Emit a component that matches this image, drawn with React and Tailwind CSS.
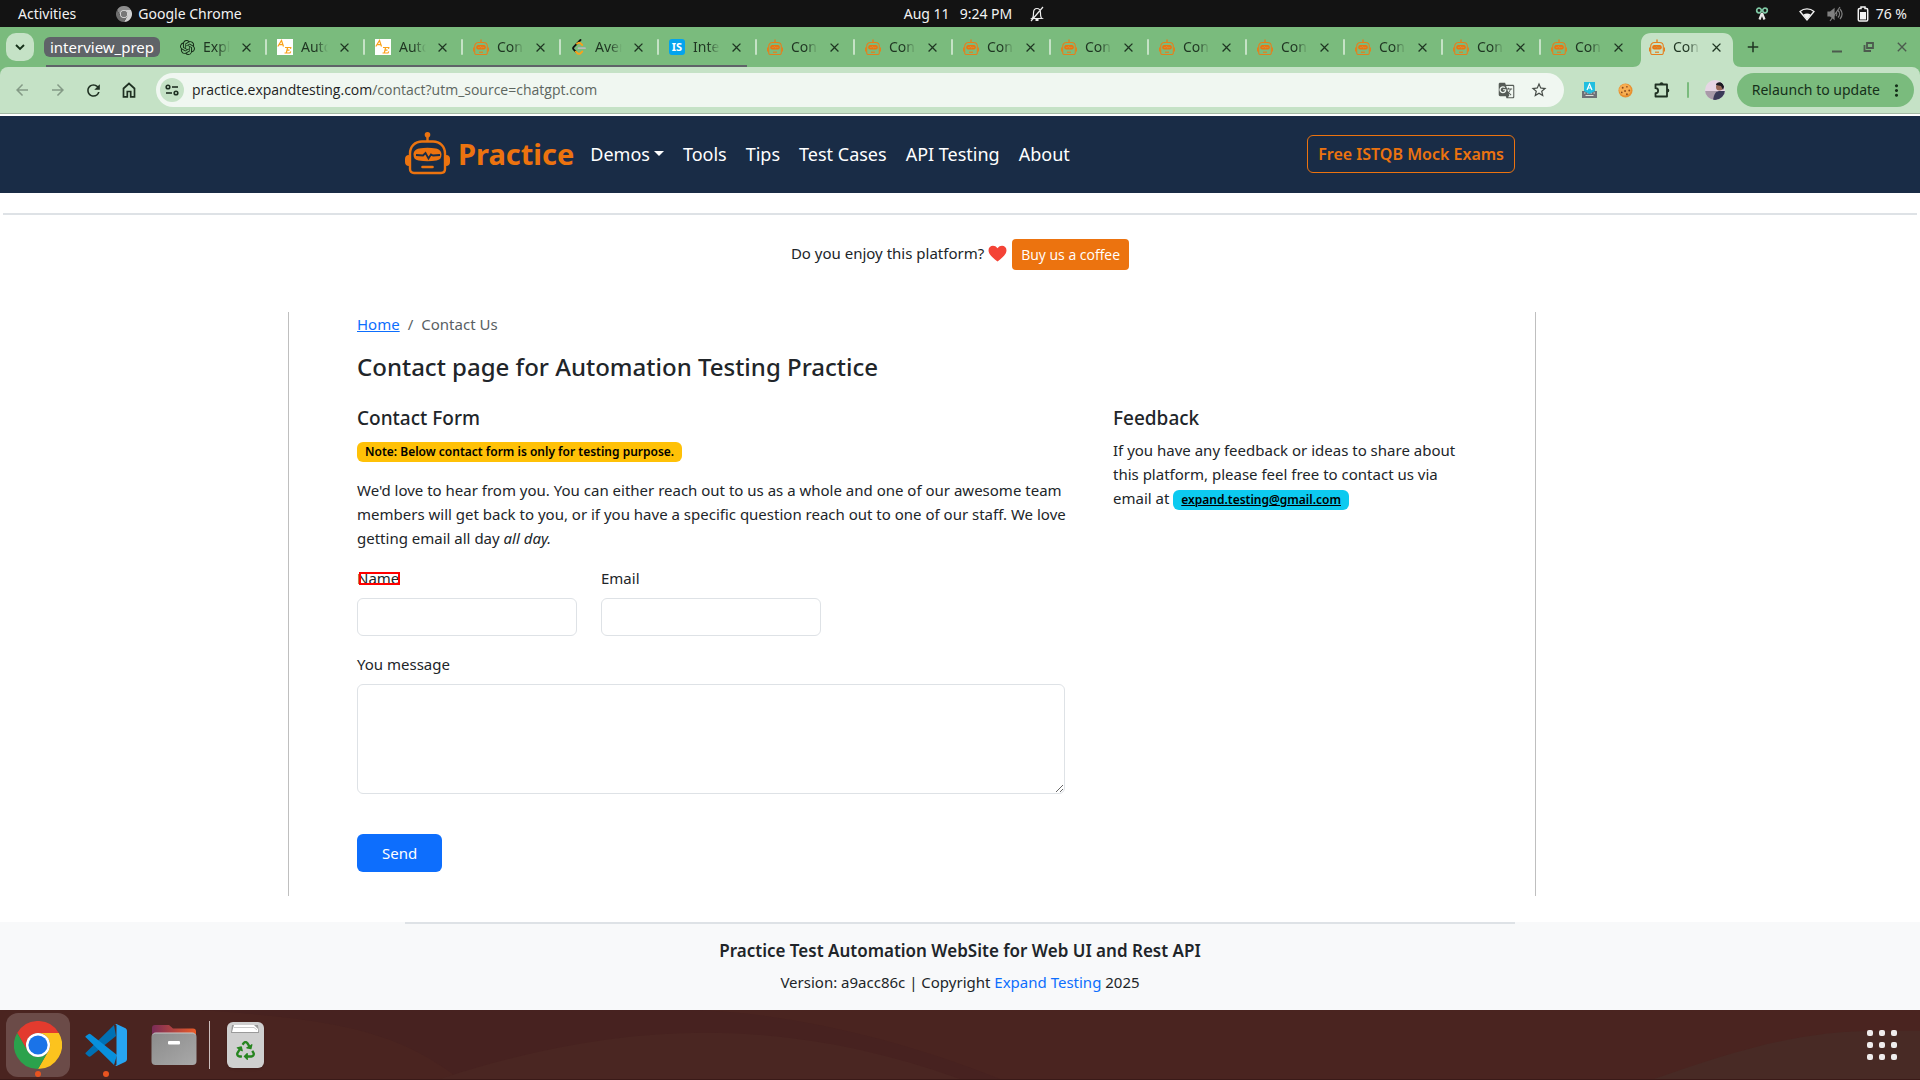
import React from "react";
import { MdGTranslate, MdStarBorder, MdRefresh, MdClose, MdAdd, MdMoreVert, MdArrowBack, MdArrowForward } from "react-icons/md";
import { SiOpenai } from "react-icons/si";
import { FaRecycle } from "react-icons/fa";

function Robot({ className }) {
  return (
    <svg viewBox="0 0 45 43" className={className} fill="none" aria-hidden="true">
      <g stroke="#ec730f" strokeWidth="2.4">
        <path d="M22.5 4v6" />
        <path d="M17 9.5h11c7 0 12 5 12 12V37c0 2.500-1.500 4-4 4H9c-2.500 0-4-1.500-4-4V21.500c0-7 5-12 12-12Z" />
      </g>
      <circle cx="22.500" cy="2.800" r="2.800" fill="#ec730f" />
      <path d="M4 23c-3 0-4 2-4 4v3c0 2.500 1.500 4 4 4ZM41 23c3 0 4 2 4 4v3c0 2.500-1.500 4-4 4Z" fill="#ec730f" />
      <path d="M14 16.500c6-1 11-1 17 0 3 .5 5.500 2.500 5.500 6s-1.500 5.500-5 6c-6 1-12 1-18 0-3.500-.5-5-2.500-5-6s2.500-5.500 5.500-6Z" fill="#ec730f" />
      <path d="M11 23l7 .5 2.500-2.500 3 5.500 2.500-4 2 1 7-.5" stroke="#192c46" strokeWidth="1.800" />
      <path d="M17.500 35h10" stroke="#ec730f" strokeWidth="2.600" strokeLinecap="round" />
    </svg>
  );
}

function TinyRobot() {
  return (
    <svg viewBox="0 0 16 16" className="size-4" fill="none" aria-hidden="true">
      <path d="M8 0.500v3" stroke="#e57f1d" strokeWidth="1.400" />
      <path d="M5.500 3.500h5c2.300 0 3.800 1.600 3.800 3.700V14c0 1-.5 1.500-1.500 1.500H3.200c-1 0-1.500-.5-1.500-1.500V7.200c0-2.100 1.500-3.700 3.800-3.700Z" stroke="#e57f1d" strokeWidth="1.100" />
      <path d="M.6 8.500v4M15.400 8.500v4" stroke="#e57f1d" strokeWidth="1.200" />
      <rect x="3.200" y="6" width="9.600" height="4.600" rx="2" fill="#ec730f" />
      <path d="M4.800 8.300h2l1-.8.8 1.500.8-.7h2" stroke="#b9a25a" strokeWidth=".7" />
      <path d="M6 13.200h4" stroke="#e57f1d" strokeWidth="1.200" />
    </svg>
  );
}

function AeIcon() {
  return (
    <svg viewBox="0 0 16 16" className="size-4" fill="none" aria-hidden="true">
      <rect width="16" height="16" fill="#fff" />
      <g stroke="#f9a21b" strokeWidth="1.200">
        <path d="M.8 7.500 4.500 1.500l2 6M2 5.600h4" />
        <path d="M8 8.500h5.800l-.3 1.300M10.600 8.500l-1.300 5.500M7.500 14h5.500l.8-1.600M10 11.200h2.500" />
      </g>
    </svg>
  );
}

function LeetIcon() {
  return (
    <svg viewBox="0 0 16 16" className="size-4" fill="none" strokeWidth="1.800" strokeLinecap="round" aria-hidden="true">
      <path d="M9.500 1 2.800 7.800c-.8.800-.8 2 0 2.800l2 2" stroke="#111" />
      <path d="M4.800 12.600l1.400 1.400c1 1 2.600 1 3.600 0l1.500-1.500M6 4.800l.8-.6c1-.6 2.200-.4 3 .4l1.400 1.400" stroke="#f9a21b" />
      <path d="M7.500 9.200h6.500" stroke="#b9b9b9" />
    </svg>
  );
}

function IsIcon() {
  return (
    <span className="flex size-4 items-center justify-center rounded-[3px] bg-[#03a4ee] text-[11px] leading-4 font-bold text-white">IS</span>
  );
}

const icons = {
  openai: <SiOpenai className="size-[15px] text-[#142a17]" />,
  ae: <AeIcon />,
  bot: <TinyRobot />,
  leet: <LeetIcon />,
  is: <IsIcon />,
};

const groupTabs = [
  ["openai", "Expl"],
  ["ae", "Auto"],
  ["ae", "Auto"],
  ["bot", "Con"],
  ["leet", "Aver"],
  ["is", "Inte"],
];
const restTabs = Array.from({ length: 9 }, () => ["bot", "Con"]);

function Tab({ icon, label, active, last }) {
  return (
    <div className="relative flex h-10 w-[98px] items-center pl-[11px]">
      {active && (
        <svg viewBox="0 0 108 34" preserveAspectRatio="none" className="absolute bottom-0 -left-[5px] h-[34px] w-[108px]" aria-hidden="true">
          <path d="M0 34c5 0 8-3 8-8V10C8 4 12 0 18 0h72c6 0 10 4 10 10v16c0 5 3 8 8 8Z" fill="#c5e2c6" />
        </svg>
      )}
      <button className="relative flex items-center gap-2">
        <span className="flex size-4 items-center justify-center">{icons[icon]}</span>
        <span className="w-[27px] overflow-hidden text-left text-[14px] leading-5 whitespace-nowrap text-[#1f3522] [mask-image:linear-gradient(to_right,black_55%,transparent)]">{label}</span>
      </button>
      <button aria-label="Close tab" className="relative ml-[9px]">
        <MdClose className="size-[15px] text-[#1f3522]" />
      </button>
      {!active && !last && <span className="absolute top-3 -right-px h-4 w-0.5 rounded bg-[#c5e2c6]" />}
    </div>
  );
}

function ChromeMark({ className, mono }) {
  const c = mono ? ["#8d8d8d", "#d0d0d0", "#6d6d6d", "#eeeeee", "#777777"] : ["#e33b2e", "#fcc31e", "#2ba24c", "#ffffff", "#1a73e8"];
  return (
    <svg viewBox="0 0 48 48" className={className} aria-hidden="true">
      <path d="M3.200 12A24 24 0 0 1 44.800 12H24A12 12 0 0 0 13.600 30Z" fill={c[0]} />
      <path d="M44.800 12A24 24 0 0 1 24 48L34.400 30A12 12 0 0 0 24 12Z" fill={c[1]} />
      <path d="M24 48A24 24 0 0 1 3.200 12L13.600 30A12 12 0 0 0 34.400 30Z" fill={c[2]} />
      <circle cx="24" cy="24" r="12" fill={c[3]} />
      <circle cx="24" cy="24" r="9.600" fill={c[4]} />
    </svg>
  );
}

function TopBar() {
  return (
    <header className="grid h-[27px] grid-cols-[1fr_auto_1fr] items-center bg-[#131313] px-[18px] text-[14px] leading-5 text-[#f2f2f2]">
      <div className="flex items-center">
        <button>Activities</button>
        <button className="ml-10 flex items-center gap-[6px]">
          <ChromeMark mono className="size-4" />
          Google Chrome
        </button>
      </div>
      <div className="ml-[29px] flex items-center">
        <span>Aug 11</span>
        <span className="ml-2.5">9:24 PM</span>
        <svg viewBox="0 0 16 16" className="ml-[17px] size-4" fill="none" stroke="#eee" strokeWidth="1.200" aria-hidden="true">
          <path d="M3 12.500h10c-1.500-1-1.500-3-1.500-5.500C11.500 4 10 2.500 8 2.500S4.500 4 4.500 7c0 2.500 0 4.500-1.500 5.500ZM14 1 2 15" />
          <path d="M6.500 14h3" strokeWidth="2" />
        </svg>
      </div>
      <div className="-mr-[5px] flex items-center justify-end">
        <svg viewBox="0 0 14 14" className="size-3.5" fill="none" aria-hidden="true">
          <path d="M7 6 9.500 12.500M7 6 4.500 12.500" stroke="#e8e8e8" strokeWidth="2.200" />
          <circle cx="4" cy="3.500" r="2.300" stroke="#7fc8a4" strokeWidth="1.700" />
          <circle cx="10" cy="3.500" r="2.300" stroke="#7fc8a4" strokeWidth="1.700" />
        </svg>
        <svg viewBox="0 0 16 14" className="ml-[30px] h-3.5 w-4" aria-hidden="true">
          <path d="M1 4.500C5 1 11 1 15 4.500L8 13Z" fill="none" stroke="#f2f2f2" strokeWidth="1.300" />
          <path d="M4.300 7.500c2.500-1.500 5-1.500 7.400 0L8 12.500Z" fill="#f2f2f2" />
        </svg>
        <svg viewBox="0 0 16 16" className="ml-3 size-4" fill="none" stroke="#808080" strokeWidth="1.200" aria-hidden="true">
          <path d="M1 6h2.500L7 3v10l-3.500-3H1Z" fill="#808080" />
          <path d="M9 6c1 1 1 3 0 4M11 4.500c2 2 2 5 0 7M13 3c2.500 3 2.500 7 0 10M13 1 3 15" />
        </svg>
        <svg viewBox="0 0 12 16" className="ml-3.5 h-4 w-3" aria-hidden="true">
          <path d="M4 1h4v1.500h1.500c.8 0 1.200.4 1.200 1.200v10c0 .8-.4 1.300-1.200 1.300h-7c-.8 0-1.200-.5-1.200-1.300v-10c0-.8.4-1.200 1.200-1.200H4Z" fill="none" stroke="#f2f2f2" strokeWidth="1.500" />
          <path d="M3 6h6v7.500H3Z" fill="#f2f2f2" />
        </svg>
        <span className="ml-[7px]">76 %</span>
      </div>
    </header>
  );
}

function TabStrip() {
  return (
    <div className="flex h-10 items-center bg-[#7abb7d] pl-1.5">
      <button aria-label="Search tabs" className="flex size-7 items-center justify-center rounded-[10px] bg-[#c5e2c6]">
        <svg viewBox="0 0 10 10" className="size-2.5" fill="none" stroke="#16301a" strokeWidth="1.900" aria-hidden="true"><path d="m1 3 4 4 4-4" /></svg>
      </button>
      <div className="relative ml-2.5 flex items-center">
        <button className="mr-2 h-5 w-[116px] rounded-md bg-[#5f6368] text-center text-[15px] leading-5 text-white">interview_prep</button>
        {groupTabs.map(([icon, label], i) => <Tab key={i} icon={icon} label={label} />)}
        <span className="absolute right-[9px] bottom-0 left-0.5 h-0.5 bg-[#5f6368]" />
      </div>
      {restTabs.map(([icon, label], i) => <Tab key={i} icon={icon} label={label} last={i === 8} />)}
      <Tab icon="bot" label="Con" active />
      <button aria-label="New tab" className="ml-2"><MdAdd className="size-[18px] text-[#1f3522]" /></button>
      <div className="mr-2.5 ml-auto flex items-center gap-[18px] text-[#4c5a4e]">
        <button aria-label="Minimize">
          <svg viewBox="0 0 14 14" className="size-3.5" aria-hidden="true"><path d="M2 10.500h10v2H2z" fill="currentColor" /></svg>
        </button>
        <button aria-label="Restore">
          <svg viewBox="0 0 14 14" className="size-3.5" fill="none" stroke="currentColor" strokeWidth="1.800" aria-hidden="true"><path d="M5 3h6v5H5zM2.500 5v6H9" /></svg>
        </button>
        <button aria-label="Close"><MdClose className="size-4" /></button>
      </div>
    </div>
  );
}

function Toolbar() {
  return (
    <div className="bg-[#7abb7d]">
      <div className="flex h-[47px] items-center rounded-t-lg border-b border-[#a3b8a4] bg-[#c5e2c6] pr-1.5 pl-[13px] text-[#1f3022]">
        <button aria-label="Back" className="text-[#849a86]"><MdArrowBack className="size-[18px]" /></button>
        <button aria-label="Forward" className="ml-[18px] text-[#849a86]"><MdArrowForward className="size-[18px]" /></button>
        <button aria-label="Reload" className="ml-[17px]"><MdRefresh className="size-[19px]" /></button>
        <button aria-label="Home" className="ml-[17px]">
          <svg viewBox="0 0 18 18" className="size-[18px]" fill="none" stroke="currentColor" strokeWidth="1.700" aria-hidden="true">
            <path d="M3.500 7.500 9 2.500l5.500 5v8.300h-3.800V10.500H7.300v5.300H3.500Z" />
          </svg>
        </button>
        <div className="ml-[18px] flex h-[34px] flex-1 items-center rounded-full bg-[#f0f7f1] pr-4 pl-1">
          <button aria-label="Site information" className="flex size-6 items-center justify-center rounded-full bg-[#c5e2c6]">
            <svg viewBox="0 0 14 14" className="size-3.5" fill="none" stroke="currentColor" strokeWidth="1.600" aria-hidden="true">
              <circle cx="3" cy="4" r="1.800" /><path d="M7 4h6" /><circle cx="11" cy="10" r="1.800" /><path d="M1 10h6" />
            </svg>
          </button>
          <div className="ml-2 flex-1 text-[14px] leading-5 text-[#1f1f1f] [font-family:'Open_Sans',sans-serif]">
            practice.expandtesting.com<span className="text-[#5d6660]">/contact?utm_source=chatgpt.com</span>
          </div>
          <button aria-label="Translate"><MdGTranslate className="size-[17px] text-[#555b56]" /></button>
          <button aria-label="Bookmark" className="ml-[15px]"><MdStarBorder className="size-[18px] text-[#454b46]" /></button>
        </div>
        <button aria-label="Typing extension" className="ml-[17px]">
          <svg viewBox="0 0 17 17" className="size-[17px]" aria-hidden="true">
            <path d="M1 9h15v7H1z" fill="#6d7176" />
            <path d="M3 11h1.500M6 11h1.500M9.500 11H11M12.500 11H14M4.500 13.500h8" stroke="#d8dcd8" />
            <path d="M3 0h11v9l-5.500 3L3 9Z" fill="#21bfe0" />
            <path d="m6 8 2.500-6L11 8M7 6h3" stroke="#fff" strokeWidth="1.200" fill="none" />
          </svg>
        </button>
        <button aria-label="Cookie extension" className="ml-5">
          <svg viewBox="0 0 16 16" className="size-[15px]" aria-hidden="true">
            <circle cx="8" cy="8" r="7.500" fill="#e8902f" /><circle cx="7.500" cy="7.200" r="6.200" fill="#f7ae52" />
            <g fill="#8a4a1c"><circle cx="5" cy="5" r="1" /><circle cx="9.500" cy="4" r=".9" /><circle cx="12" cy="8" r="1" /><circle cx="7.500" cy="8.500" r="1" /><circle cx="4" cy="10" r=".9" /><circle cx="9.500" cy="12" r="1" /></g>
          </svg>
        </button>
        <button aria-label="Extensions" className="ml-5">
          <svg viewBox="0 0 18 18" className="size-[18px]" fill="none" stroke="currentColor" strokeWidth="1.800" strokeLinejoin="round" aria-hidden="true">
            <path d="M2.500 3.500H14v12H2.500V12.200c3.500 0 3.500-5 0-5Z" />
            <path d="M6.500 3.200a2 2 0 0 1 4 0ZM14.300 7.500a2 2 0 0 1 0 4Z" fill="currentColor" strokeWidth="0" />
          </svg>
        </button>
        <span className="ml-4 h-4 w-0.5 rounded bg-[#7abb7d]" />
        <button aria-label="Profile" className="ml-4">
          <svg viewBox="0 0 20 20" className="size-5 overflow-hidden rounded-full" aria-hidden="true">
            <path d="M0 0h20v20H0z" fill="#e6d6e4" />
            <path d="M0 11h12v9H0z" fill="#a89aa8" />
            <path d="M8 20c1-6 3-9 6-9h6v9Z" fill="#3a3a58" />
            <circle cx="14.500" cy="7" r="3.500" fill="#9a6a58" />
            <path d="M11 5c0-4 8-4 8 2l-1 3-2-4Z" fill="#1c1a22" />
          </svg>
        </button>
        <button className="ml-3 flex h-[34px] items-center rounded-full bg-[#7abb7d] pr-2 pl-[15px] text-[14px] leading-5 text-[#16301a]">
          Relaunch to update
          <MdMoreVert className="ml-[7px] size-[19px]" />
        </button>
      </div>
    </div>
  );
}

function SiteNav() {
  return (
    <nav className="mt-0.5 bg-[#192c46]">
      <div className="mx-auto flex h-[77px] max-w-[1110px] items-center pb-0.5">
        <a href="#home" className="flex items-center gap-2 text-[#ec730f]">
          <Robot className="h-[43px] w-[45px]" />
          <span className="text-[29px] leading-9 font-bold">Practice</span>
        </a>
        <div className="ml-4 flex items-center gap-[19px] text-[18px] leading-7 text-white">
          <a href="#demos" className="flex items-center gap-1">
            Demos
            <svg viewBox="0 0 10 5" className="h-[5px] w-2.5" aria-hidden="true"><path d="M0 0h10L5 5Z" fill="currentColor" /></svg>
          </a>
          <a href="#tools">Tools</a>
          <a href="#tips">Tips</a>
          <a href="#cases">Test Cases</a>
          <a href="#api">API Testing</a>
          <a href="#about">About</a>
        </div>
        <a href="#exams" className="ml-auto rounded-md border border-[#ec730f] px-2.5 py-1.5 text-[16px] leading-6 font-semibold text-[#ec730f]">Free ISTQB Mock Exams</a>
      </div>
    </nav>
  );
}

const field = "block w-full rounded-md border border-[#dee2e6] bg-white px-3 py-1.5 text-[15px] leading-6 outline-none";

function ContactForm() {
  return (
    <form className="mt-4 grid grid-cols-3 gap-x-6 gap-y-4 pr-6" onSubmit={(e) => e.preventDefault()}>
      <div>
        <label htmlFor="name" className="relative mb-2 inline-block">
          Name
          <span className="absolute top-1.5 left-0.5 h-[13px] w-[41px] border-2 border-[#ff0000]" />
        </label>
        <input id="name" type="text" className={field} />
      </div>
      <div>
        <label htmlFor="email" className="mb-2 inline-block">Email</label>
        <input id="email" type="email" className={field} />
      </div>
      <div className="col-span-3">
        <label htmlFor="message" className="mb-2 inline-block">You message</label>
        <textarea id="message" rows={4} className={field + " resize-y"} />
      </div>
      <div className="col-span-3 mt-6">
        <button type="submit" className="rounded-md bg-[#0d6efd] px-[25px] py-[7px] leading-6 text-white">Send</button>
      </div>
    </form>
  );
}

function Main() {
  return (
    <main className="grow">
      <hr className="mx-[3px] mt-5 border-t-2 border-[#dee2e6]" />
      <div className="mt-6 flex items-start justify-center">
        <span className="mt-0.5">Do you enjoy this platform?</span>
        <svg viewBox="0 0 20 18" className="mt-1.5 ml-1 h-[17px] w-[19px]" aria-label="heart">
          <path d="M10 17.500C4 13 .5 9.500.5 5.500c0-5 6.500-6.500 9.500-2 3-4.500 9.500-3 9.500 2 0 4-3.500 7.500-9.500 12Z" fill="#f44336" />
        </svg>
        <a href="#coffee" className="ml-[5px] rounded bg-[#ec730f] px-[9px] py-[5px] text-[14px] leading-[21px] text-white [font-family:'Open_Sans',sans-serif]">Buy us a coffee</a>
      </div>
      <div className="mt-[42px] mr-[20%] ml-[15%] border-x border-[#bfbfbf] px-[68px] pb-6">
        <ol className="flex leading-6">
          <li><a href="#home" className="text-[#0d6efd] underline">Home</a></li>
          <li className="px-2 text-[#595f64]">/</li>
          <li className="text-[#595f64]">Contact Us</li>
        </ol>
        <h1 className="mt-4 text-[24px] leading-[30px] font-medium">Contact page for Automation Testing Practice</h1>
        <div className="mt-6 grid grid-cols-3 gap-6">
          <section className="col-span-2">
            <h2 className="text-[19px] leading-6 font-medium">Contact Form</h2>
            <p className="mt-2.5 flex h-6 items-center">
              <span className="rounded-md bg-[#ffc107] px-2 py-0.5 text-[12px] leading-4 font-semibold text-black">Note: Below contact form is only for testing purpose.</span>
            </p>
            <p className="mt-3.5">
              We'd love to hear from you. You can either reach out to us as a whole and one of our awesome team members will get back to you, or if you have a specific question reach out to one of our staff. We love getting email all day <em>all day.</em>
            </p>
            <ContactForm />
          </section>
          <section>
            <h2 className="text-[19px] leading-6 font-medium">Feedback</h2>
            <p className="mt-2">
              If you have any feedback or ideas to share about this platform, please feel free to contact us via email at{" "}
              <a href="#mail" className="inline-block rounded-md bg-[#0dcaf0] px-2 py-0.5 align-middle text-[12px] leading-4 font-semibold text-black underline">expand.testing@gmail.com</a>
            </p>
          </section>
        </div>
      </div>
    </main>
  );
}

function Footer() {
  return (
    <footer className="mt-[25px] bg-[#f8f9fa] pb-4 text-center">
      <hr className="mx-auto max-w-[1110px] border-t-2 border-[#dee2e6]" />
      <h2 className="mt-4 text-[17px] leading-[22px] font-semibold">Practice Test Automation WebSite for Web UI and Rest API</h2>
      <p className="mt-2 leading-6">
        Version: a9acc86c | Copyright <a href="#site" className="text-[#0d6efd]">Expand Testing</a> 2025
      </p>
    </footer>
  );
}

function Dock() {
  return (
    <div className="relative flex h-[70px] shrink-0 items-center overflow-hidden border-b border-[#3a1a18] bg-[#4a2420] pl-1.5">
      <svg viewBox="0 0 1920 70" preserveAspectRatio="none" className="absolute inset-0 size-full" aria-hidden="true">
        <path d="M200 0c150 10 200 25 260 70h540C900 30 800 5 700 0Z" fill="#472220" />
        <path d="M440 70C620 10 780 5 960 70Z" fill="#4a2622" />
        <path d="M1654 70C1740 40 1800 21 1880 21h40v49Z" fill="#482a25" />
      </svg>
      <button aria-label="Google Chrome" className="relative flex size-16 items-center justify-center rounded-xl bg-[#6b4b48]">
        <ChromeMark className="size-12" />
        <span className="absolute bottom-0 size-1.5 rounded-full bg-[#e95420]" />
      </button>
      <button aria-label="Visual Studio Code" className="relative ml-1 flex size-16 items-center justify-center">
        <svg viewBox="0 0 42 42" className="size-[42px]" aria-hidden="true">
          <path d="M1 28.500 29 1l2 11L6 32c-1 1-2 1-3 0L.8 30c-.6-.6-.5-1 .2-1.500Z" fill="#0070b3" />
          <path d="M1 13.500 29 41l3-10L6 10.500c-1-1-2-1-3 0L.8 12c-.6.6-.5 1 .2 1.500Z" fill="#0890dc" />
          <path d="M29 .5c1-.8 2-.6 3-.2L40 4c1.300.7 2 1.500 2 3v28c0 1.500-.7 2.300-2 3l-8 3.700c-1 .4-2 .6-3-.2 1.500.7 2.500 0 2.500-1.500V2C31.500.5 30.500-.2 29 .5Z" fill="#27a5f2" />
        </svg>
        <span className="absolute bottom-0 size-1.5 rounded-full bg-[#e95420]" />
      </button>
      <button aria-label="Files" className="relative ml-1 flex size-16 items-center justify-center">
        <svg viewBox="0 0 46 42" className="h-[42px] w-[46px]" aria-hidden="true">
          <defs>
            <linearGradient id="folder" x1="0" x2="1"><stop offset="0" stopColor="#7a2c58" /><stop offset="1" stopColor="#ea5b27" /></linearGradient>
            <linearGradient id="front" x1="0" y1="0" x2="1" y2="1"><stop offset="0" stopColor="#8b8b8b" /><stop offset="1" stopColor="#a9a9a9" /></linearGradient>
          </defs>
          <path d="M1 4c0-2 1-3 3-3h14l4 3.500h20c2 0 3 1 3 3V20H1Z" fill="url(#folder)" />
          <rect x=".5" y="9" width="45" height="32" rx="4" fill="url(#front)" />
          <path d="M2 10.500C3 9 4 9 5 9h36c1 0 2 0 3 1.500" stroke="#c8c8c8" fill="none" />
          <rect x="17" y="17" width="12" height="3.500" rx="1" fill="#fff" />
        </svg>
      </button>
      <span className="relative ml-[3px] h-12 w-px bg-[#cdbfbe]" />
      <button aria-label="Trash" className="relative ml-[3px] flex size-16 items-center justify-center">
        <span className="flex h-[46px] w-[37px] flex-col items-center rounded-md bg-[#cfcfcf] shadow">
          <svg viewBox="0 0 30 9" className="mt-0.5 h-[9px] w-[30px]" aria-hidden="true">
            <path d="M2 1h26l1 8H1Z" fill="#9a9a9a" /><path d="M4 1h20l4 4v3H2Z" fill="#fff" /><path d="M4 3.500h20l3 2.500" stroke="#bbb" strokeWidth=".8" fill="none" />
          </svg>
          <FaRecycle className="mt-2 size-[19px] text-[#26851f]" />
        </span>
      </button>
      <button aria-label="Show applications" className="relative mr-[23px] ml-auto grid grid-cols-3 gap-1.5">
        {Array.from({ length: 9 }, (_, i) => <span key={i} className="size-1.5 rounded-[2px] bg-[#efecec]" />)}
      </button>
    </div>
  );
}

export default function App() {
  return (
    <div className="flex min-h-screen flex-col bg-white text-[15px] leading-6 text-[#212529] [font-family:'Noto_Sans',sans-serif]">
      <TopBar />
      <TabStrip />
      <Toolbar />
      <SiteNav />
      <Main />
      <Footer />
      <Dock />
    </div>
  );
}
